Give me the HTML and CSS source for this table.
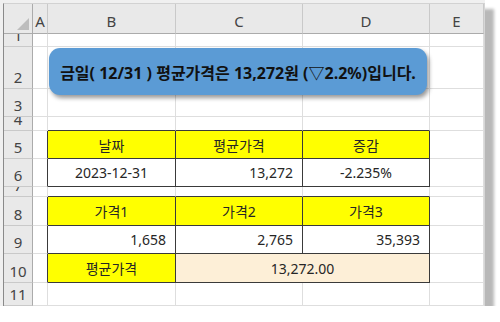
FILE: index.html
```html
<!DOCTYPE html>
<html lang="ko">
	<head>
		<meta charset="utf-8">

		<title>평균가격</title>

		<link rel="stylesheet" href="styles.css">
	</head>
	<body>
	<div class="window">
		<div class="sheet">
			<div class="grid">
				<!-- column headers -->
				<div class="corner"></div>
				<div class="hd">A</div>
				<div class="hd">B</div>
				<div class="hd">C</div>
				<div class="hd">D</div>
				<div class="hd">E</div>

				<!-- 1 -->
				<div class="rh">1</div>
				<div class="c"></div><div class="c"></div><div class="c"></div><div class="c"></div><div class="c"></div>

				<!-- 2 -->
				<div class="rh">2</div>
				<div class="c"></div><div class="c"></div><div class="c"></div><div class="c"></div><div class="c"></div>

				<!-- 3 -->
				<div class="rh">3</div>
				<div class="c"></div><div class="c"></div><div class="c"></div><div class="c"></div><div class="c"></div>

				<!-- 4 -->
				<div class="rh">4</div>
				<div class="c"></div>
				<div class="c edge-b"></div><div class="c edge-b"></div><div class="c edge-b"></div>
				<div class="c"></div>

				<!-- 5 -->
				<div class="rh">5</div>
				<div class="c edge-r"></div>
				<div class="c tb yellow">날짜</div>
				<div class="c tb yellow">평균가격</div>
				<div class="c tb yellow">증감</div>
				<div class="c"></div>

				<!-- 6 -->
				<div class="rh">6</div>
				<div class="c edge-r"></div>
				<div class="c tb">2023-12-31</div>
				<div class="c tb num">13,272</div>
				<div class="c tb">-2.235%</div>
				<div class="c"></div>

				<!-- 7 -->
				<div class="rh">7</div>
				<div class="c"></div>
				<div class="c edge-b"></div><div class="c edge-b"></div><div class="c edge-b"></div>
				<div class="c"></div>

				<!-- 8 -->
				<div class="rh">8</div>
				<div class="c edge-r"></div>
				<div class="c tb yellow">가격1</div>
				<div class="c tb yellow">가격2</div>
				<div class="c tb yellow">가격3</div>
				<div class="c"></div>

				<!-- 9 -->
				<div class="rh">9</div>
				<div class="c edge-r"></div>
				<div class="c tb num">1,658</div>
				<div class="c tb num">2,765</div>
				<div class="c tb num">35,393</div>
				<div class="c"></div>

				<!-- 10 -->
				<div class="rh">10</div>
				<div class="c edge-r"></div>
				<div class="c tb yellow">평균가격</div>
				<div class="c tb avg merged">13,272.00</div>
				<div class="c"></div>

				<!-- 11 -->
				<div class="rh">11</div>
				<div class="c"></div><div class="c"></div><div class="c"></div><div class="c"></div><div class="c"></div>
			</div>

			<div class="callout">금일( 12/31 ) 평균가격은 13,272원 (▽2.2%)입니다.</div>
		</div>
	</div>
	</body>
</html>
```

FILE: styles.css
```css
body {
	margin: 0;
	background: #fff;
	color: #262626;

	font-family: "Noto Sans", "Noto Sans CJK KR", sans-serif;
	font-size: 14px;
}

div.window
{
	width: 485px;
	height: 306px;
	padding-top: 3px;
	box-sizing: border-box;

	background: #f0f0f0;
	box-shadow: 9px 9px 3px #b8b8b8;
}

div.sheet {
	position: relative;
	margin-left: 3px;
	height: 303px;
	box-sizing: border-box;

	background: #fff;
	border-left: 1px solid #8a8a8a;
	border-top: 1px solid #d2d2d2;
	border-right: 1px solid #d6d6d6;
}

div.grid {
	display: grid;
	grid-template-columns: 29px 15px 128px 127px 127px 54px;
	grid-template-rows: 30px 13px 42px 28px 14px 28px 28px 10px 29px 28px 29px 23px;
}

/* headers */
div.corner,
div.hd,
div.rh {
	background: #e9e9e9;
	color: #444;
	border-right: 1px solid #c9c9c9;
	border-bottom: 1px solid #c9c9c9;
	overflow: hidden;
	line-height: 1;
}

div.corner {
	display: flex;
	align-items: flex-end;
	justify-content: flex-end;
	border-right-color: #ababab;
	border-bottom-color: #ababab;
}

div.corner::after {
	content: "";
	width: 12px;
	height: 12px;
	margin: 0 3px 3px 0;
	background: #bdbdbd;
	clip-path: polygon(100% 0, 100% 100%, 0 100%);
}

div.hd {
	display: flex;
	align-items: flex-end;
	justify-content: center;
	padding-bottom: 4px;
	font-size: 15px;
	border-bottom-color: #ababab;
}

/* short rows clip their number, like the sheet does */
div.rh {
	display: flex;
	align-items: flex-end;
	justify-content: center;
	padding-bottom: 3px;
	font-size: 15px;
	border-right-color: #ababab;
}

/* cells */
div.c {
	display: flex;
	align-items: center;
	justify-content: center;
	overflow: hidden;
	white-space: nowrap;
	border-right: 1px solid #dedede;
	border-bottom: 1px solid #dedede;
}

div.c.tb,
div.c.edge-r {
	border-right-color: #3a3a3a;
}

div.c.tb,
div.c.edge-b {
	border-bottom-color: #3a3a3a;
}

div.c.num {
	justify-content: flex-end;
	padding-right: 9px;
}

div.c.yellow {
	background: #ffff00;
}

div.c.avg {
	background: #fdefd7;
}

div.c.merged {
	grid-column: span 2;
}

/* rounded note over rows 1-3 */
div.callout {
	position: absolute;
	left: 45px;
	top: 44px;
	width: 378px;
	height: 47px;

	display: flex;
	align-items: center;
	justify-content: center;

	background: #5b9bd5;
	color: #111;
	border-radius: 11px;
	box-shadow: 2px 3px 4px rgba(0,0,0,0.4);

	font-size: 16px;
	font-weight: bold;
	white-space: nowrap;
}
```
